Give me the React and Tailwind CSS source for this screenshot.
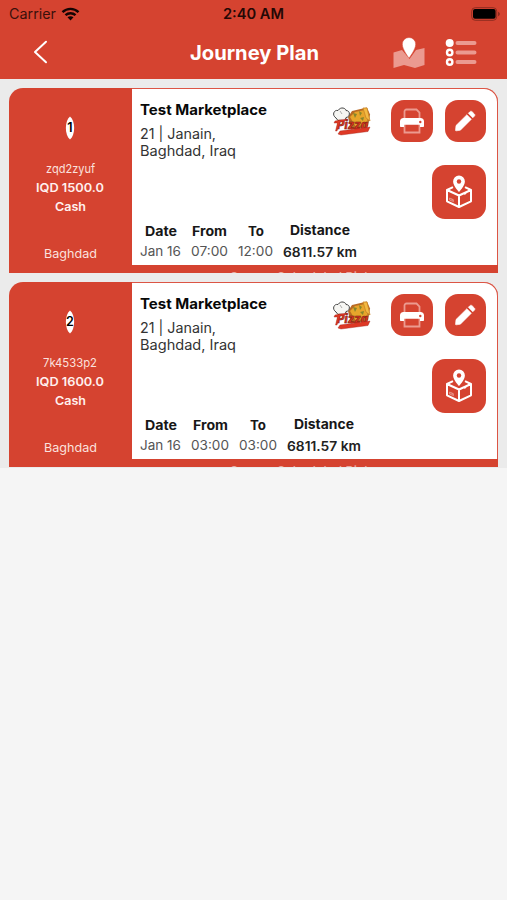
import React from "react";

const font = "font-['Inter','Liberation_Sans',sans-serif]";

// SVG text keeps each label's measured width steady.
function T({ children, w, h = 18, size, weight = 400, fill = "#fff", className = "" }) {
  return (
    <svg width={w} height={h} className={`block overflow-visible shrink-0 ${className}`}>
      <text x="0" y={size - 0.4} fontSize={size} fontWeight={weight} fill={fill} textLength={w} lengthAdjust="spacingAndGlyphs">{children}</text>
    </svg>
  );
}

function Wifi() {
  return (
    <svg width="19" height="14" viewBox="0 0 18 14" fill="none" stroke="#140403" strokeWidth="2.4">
      <path d="M1 5.2C5.5.8 12.5.8 17 5.2M4 8.2c2.8-2.7 7.2-2.7 10 0" />
      <path d="M6 10.3c1.7-1.5 4.3-1.5 6 0L9 13.4z" fill="#140403" stroke="none" />
    </svg>
  );
}

function Header() {
  return (
    <header className="h-[79px] bg-[#d54330]">
      <div className="flex h-[27px] items-center justify-between pl-[9px] pr-[6px]">
        <div className="flex w-[168px] items-center gap-[5px]">
          <T w={47} size={14} h={17} fill="#3a100b">Carrier</T>
          <Wifi />
        </div>
        <T w={61} size={14} h={17} weight={600} fill="#240805">2:40 AM</T>
        <div className="flex w-[171px] justify-end">
          <svg width="30" height="14" viewBox="0 0 30 14">
            <rect x=".7" y=".7" width="25" height="12.6" rx="3.5" fill="none" stroke="#8e2c20" />
            <rect x="2" y="2" width="22.6" height="9.8" rx="2" fill="#000" />
            <path d="M27 4.8c2.5.8 2.5 3.6 0 4.4z" fill="#8e2c20" />
          </svg>
        </div>
      </div>
      <div className="flex h-[51px] items-center pl-[33px] pr-[30px]">
        <svg width="15" height="24" viewBox="0 0 15 24" className="-mt-[2px]" fill="none" stroke="#fff" strokeWidth="2" strokeLinecap="round" strokeLinejoin="round"><path d="M13 1.8 2 12l11 10.2" /></svg>
        <T w={129} size={20} h={25} weight={650} className="ml-[142px]">Journey Plan</T>
        <svg width="32" height="32" viewBox="0 0 32 32" className="ml-[74px]">
          <path d="M.5 15.5 9 13l7.5 9L23 13l8.5-2v17L22 31l-11-3L.5 31z" fill="#eb9a90" />
          <path d="M16 .5a6.7 6.7 0 0 0-6.7 6.7c0 5.4 6.7 13.8 6.7 13.8s6.7-8.4 6.7-13.8A6.7 6.7 0 0 0 16 .5z" fill="#fff" stroke="#d54330" strokeWidth=".5" />
        </svg>
        <svg width="32" height="30" viewBox="0 0 32 30" className="ml-[20px]">
          <path d="M12.5 5h17M12.5 14.5h17M12.5 24h17" stroke="#eb9a90" strokeWidth="4" strokeLinecap="round" />
          <circle cx="4.7" cy="5" r="4" fill="#fff" />
          <circle cx="4.7" cy="14.5" r="2.7" fill="none" stroke="#fff" strokeWidth="2.4" />
          <circle cx="4.7" cy="24" r="2.7" fill="none" stroke="#fff" strokeWidth="2.4" />
        </svg>
      </div>
    </header>
  );
}

function PizzaLogo() {
  return (
    <svg width="38" height="30" viewBox="0 0 38 30" className="mt-[7px] shrink-0 overflow-visible">
      <path d="M15 10 19 4 34 .5l3 7-2 12-17 3z" fill="#b96a24" />
      <path d="m17 10 5-5 10-2 3 13-12 4z" fill="#e7a52b" />
      <path d="m30 1 4 0 3 13-4-3z" fill="#f3ba43" stroke="#c98427" strokeWidth=".8" />
      <path d="m20 6 4 1-2 4zm6-2 3 2-2 3zm1 7 4-1-1 4z" fill="#87852c" />
      <path d="M3 11C-1.500 8 1 2.500 5 3.500c3-4.500 8-2 8 0 5 0 4 7 0 7l-1 3H5z" fill="#f6f6f3" stroke="#444" strokeWidth="1" />
      <path d="M7 4l2 3" fill="none" stroke="#999" strokeWidth=".8" />
      <text x="4" y="22" textLength="31" lengthAdjust="spacingAndGlyphs" fontSize="12" fontWeight="800" fontStyle="italic" fill="#dc3320" stroke="#6b1c12" strokeWidth=".5">Pizza</text>
      <path d="M2 14 14 12l-2 2-5 1-3 9H2.500l2-8H1zM7 24 37 20l-2 4.500-27 3.500-3-1z" fill="#de3825" stroke="#9e2318" strokeWidth=".4" />
    </svg>
  );
}

function Printer() {
  return (
    <svg width="26" height="26" viewBox="0 0 26 26">
      <path d="M5.500 11V3.500c0-1.200.8-2 2-2H17.500l3 3V11M5.500 16v8.500h15V16" fill="none" stroke="#ec9a8f" strokeWidth="1.800" />
      <path d="M4.500 10h17c2.200 0 3.500 1.500 3.500 3.500v4.500c0 .6-.4 1-1 1h-3v-2.300h-16V19H2c-.6 0-1-.4-1-1v-4.500c0-2 1.300-3.500 3.500-3.500z" fill="#fff" />
      <circle cx="21.300" cy="14" r="1.200" fill="#d54330" />
    </svg>
  );
}

function Pencil() {
  return (
    <svg width="22" height="22" viewBox="0 0 22 22" fill="#fff" stroke="#fff" strokeWidth=".6" strokeLinejoin="round">
      <path d="M2 15.500 12.900 4.700l4.500 4.500-11 11-4 .6c-.7.1-1-.2-.9-.9zM14.300 3.300l1.500-1.500c.8-.8 1.600-.8 2.400 0l2.100 2.100c.8.8.8 1.600 0 2.400l-1.500 1.500z" />
    </svg>
  );
}

function BoxPin() {
  return (
    <svg width="28" height="34" viewBox="0 0 28 34" fill="none" stroke="#fff" strokeWidth="2" strokeLinejoin="round">
      <path d="M8 12.200 2 15v11.300L14 32l12-5.700V15l-6-2.800M2 15l12 5.500L26 15M14 20.500V32" />
      <path d="m19.500 18v1.500l1.500-.7v-1.500" fill="#fff" strokeWidth=".6" />
      <path d="M4.500 23l4 1.700v2l-4-1.700zM6 23.500v2M7.300 24v2" stroke="#efb2aa" strokeWidth=".6" />
      <path d="M14 .6a5.900 5.900 0 0 0-5.900 5.900C8.100 11 14 17 14 17s5.900-6 5.900-10.500A5.900 5.900 0 0 0 14 .6z" fill="#fff" stroke="none" />
      <circle cx="14" cy="6.500" r="2.200" fill="#d54330" stroke="none" />
    </svg>
  );
}

function Detail({ title, titleW, value, w, distance = false }) {
  return (
    <div className={`flex shrink-0 flex-col items-center ${distance ? "-mt-px gap-[4px]" : "gap-[2px]"}`}>
      <T w={titleW} size={13} h={18} weight={700} fill="#171717">{title}</T>
      <T w={w} size={13} h={18} weight={distance ? 600 : 400} fill={distance ? "#222" : "#555"}>{value}</T>
    </div>
  );
}

function Card({ item }) {
  return (
    <article className="h-[185px] w-[489px] overflow-hidden rounded-t-[14px] bg-[#d54330]">
      <div className="flex h-full">
        <aside className="flex h-full w-[122.5px] shrink-0 flex-col items-center pt-[28px]">
          <svg width="12" height="24" viewBox="0 0 12 24" className="block shrink-0">
            <path d="M6 .5C11.500 5 11.500 19 6 23.500C.5 19 .5 5 6 .5z" fill="#fff" />
            <text x="6" y="16" textAnchor="middle" fontSize="12.500" fontWeight="600" fill="#000">{item.number}</text>
          </svg>
          <T w={item.codeW} size={12} h={16} className="mt-[21px]" fill="#fbe1de">{item.code}</T>
          <T w={68} size={12} h={16} weight={600} className="mt-[3px]" fill="#fff0ee">{item.amount}</T>
          <T w={31} size={12} h={16} weight={600} className="mt-[3px]" fill="#fff0ee">Cash</T>
          <T w={53} size={12} h={16} className="mt-[31px]" fill="#fbe1de">Baghdad</T>
        </aside>
        <div className="flex min-w-0 grow flex-col">
          <div className="flex h-[177px] shrink-0 flex-col rounded-tr-[14px] border-t border-r border-[#dc5545] bg-white pl-[8.5px]">
            <div className="flex h-[132px]">
              <div className="w-[193px] shrink-0 pt-[12px]">
                <T w={127} size={14} h={18} weight={700} fill="#080808">Test Marketplace</T>
                <T w={76} size={14} h={17} className="mt-[6px]" fill="#333">21 | Janain,</T>
                <T w={96} size={14} h={18} fill="#333">Baghdad, Iraq</T>
              </div>
              <div className="flex grow flex-col pt-[11px] pr-[11px]">
                <div className="flex justify-between">
                  <PizzaLogo />
                  <div className="flex gap-[12px]">
                    <div className="flex h-[41.5px] w-[41.5px] items-center justify-center rounded-[13px] bg-[#d54330]"><Printer /></div>
                    <div className="flex h-[41.5px] w-[41.5px] items-center justify-center rounded-[13px] bg-[#d54330]"><Pencil /></div>
                  </div>
                </div>
                <div className="mt-[23px] flex h-[54px] w-[54px] items-center justify-center self-end rounded-[13px] bg-[#d54330]"><BoxPin /></div>
              </div>
            </div>
            <div className="flex gap-[10px] pt-[2px]">
              <Detail title="Date" titleW={32} value="Jan 16" w={41} />
              <Detail title="From" titleW={35} value={item.from} w={item.fromW} />
              <Detail title="To" titleW={16} value={item.to} w={item.toW} />
              <Detail title="Distance" titleW={60} value="6811.57 km" w={74} distance />
            </div>
          </div>
          <div className="flex h-[8px] items-start justify-center overflow-hidden pt-[4px] pr-[12px]">
            <T w={157} size={13} h={18} weight={500} fill="#eda79d">Same - Scheduled Pickup</T>
          </div>
        </div>
      </div>
    </article>
  );
}

const items = [
  { number: 1, code: "zqd2zyuf", codeW: 49, amount: "IQD 1500.0", from: "07:00", fromW: 37, to: "12:00", toW: 35 },
  { number: 2, code: "7k4533p2", codeW: 54, amount: "IQD 1600.0", from: "03:00", fromW: 38, to: "03:00", toW: 38 },
];

export default function App() {
  return (
    <div className={`h-[900px] w-[507px] overflow-hidden bg-[#f5f5f5] ${font}`}>
      <Header />
      <main className="flex h-[389px] flex-col gap-[9px] bg-[#ebebeb] pt-[9px] pl-[9px]">
        {items.map((item) => <Card key={item.number} item={item} />)}
      </main>
    </div>
  );
}
